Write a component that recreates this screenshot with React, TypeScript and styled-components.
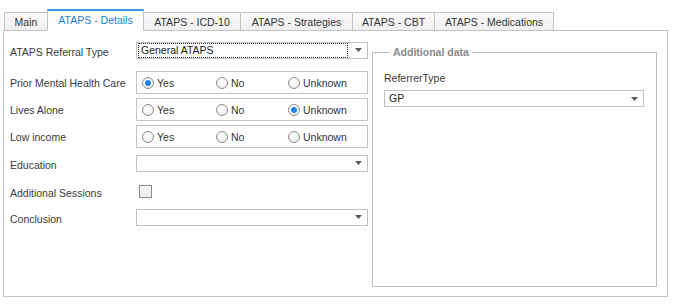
import React from "react";
import styled, { createGlobalStyle, css } from "styled-components";

const GlobalStyle = createGlobalStyle`
  html, body {
    margin: 0;
    padding: 0;
    background: #ffffff;
  }
  body {
    font-family: "Liberation Sans", Arial, sans-serif;
    font-size: 10.5px;
    color: #333333;
  }
`;

const Page = styled.div`
  width: 675px;
  height: 307px;
  overflow: hidden;
  background: #ffffff;
`;

const TabStrip = styled.div`
  display: flex;
  align-items: flex-end;
  height: 30px;
  padding-left: 4px;
  position: relative;
  z-index: 1;
`;

const Tab = styled.div<{ $w: number; $active?: boolean }>`
  box-sizing: border-box;
  width: ${(p) => p.$w}px;
  height: 18px;
  margin-right: -1px;
  display: flex;
  align-items: center;
  justify-content: center;
  border: 1px solid #c2c2c2;
  border-bottom: none;
  background: linear-gradient(#fbfbfb, #efefef);
  color: #333333;
  white-space: nowrap;

  ${(p) =>
    p.$active &&
    css`
      height: 22px;
      margin-bottom: -1px;
      border-top: 2px solid #3a97e4;
      border-bottom: 1px solid #ffffff;
      background: #ffffff;
      color: #1f7fd2;
      padding-bottom: 2px;
      position: relative;
      z-index: 2;
    `}
`;

const Panel = styled.div`
  box-sizing: border-box;
  margin-left: 3px;
  width: 665px;
  height: 267px;
  border: 1px solid #c4c4c4;
  display: flex;
  align-items: flex-start;
  padding: 10px 10px 0 6px;
`;

const Form = styled.div`
  display: flex;
  flex-direction: column;
  width: 358px;
`;

const Row = styled.div<{ $h: number; $mt?: number }>`
  display: flex;
  align-items: center;
  height: ${(p) => p.$h}px;
  margin-top: ${(p) => p.$mt ?? 0}px;
`;

const Label = styled.div<{ $drop?: number }>`
  width: 126px;
  flex: none;
  white-space: nowrap;
  color: #3a3a3a;
  padding-top: ${(p) => p.$drop ?? 0}px;
`;

const Combo = styled.div<{ $width?: number }>`
  box-sizing: border-box;
  width: ${(p) => p.$width ?? 232}px;
  height: 17px;
  border: 1px solid #c2c2c2;
  background: #ffffff;
  display: flex;
  align-items: center;
  padding: 0 5px 0 1px;
`;

const ComboText = styled.div<{ $focused?: boolean }>`
  flex: 1;
  height: 13px;
  line-height: 13px;
  padding-left: 2px;
  color: #222222;
  border: 1px solid transparent;

  ${(p) =>
    p.$focused &&
    css`
      border: 1px dotted #333333;
      margin-right: 7px;
    `}
`;

const RadioBox = styled.div`
  box-sizing: border-box;
  width: 232px;
  height: 23px;
  border: 1px solid #c4c4c4;
  display: grid;
  grid-template-columns: 74px 72px 1fr;
  align-items: center;
  padding-left: 5px;
`;

const RadioOption = styled.div`
  display: flex;
  align-items: center;
  gap: 3px;
  color: #333333;
`;

const RadioCircle = styled.span<{ $checked?: boolean }>`
  box-sizing: border-box;
  width: 12px;
  height: 12px;
  border-radius: 50%;
  border: 1px solid #8c8c8c;
  background: radial-gradient(circle at 40% 35%, #ffffff, #e9e9e9);
  display: flex;
  align-items: center;
  justify-content: center;

  &::after {
    content: "";
    width: 6px;
    height: 6px;
    border-radius: 50%;
    background: ${(p) => (p.$checked ? "#1e88e5" : "transparent")};
  }
`;

const CheckBox = styled.span`
  box-sizing: border-box;
  width: 13px;
  height: 13px;
  margin-left: 3px;
  border: 1px solid #8c8c8c;
  background: linear-gradient(#f7f7f7, #ececec);
`;

const FieldSet = styled.fieldset`
  box-sizing: border-box;
  margin: 5px 0 0 4px;
  width: 285px;
  height: 241px;
  border: 1px solid #bdbdbd;
  padding: 0 12px 0 11px;
  min-width: 0;
`;

const Legend = styled.legend`
  padding: 0 3px;
  margin-left: 6px;
  font-weight: bold;
  color: #8a8a8a;
  line-height: 13px;
`;

const FieldLabel = styled.div`
  margin-top: 13px;
  line-height: 13px;
  color: #3a3a3a;
`;

const FieldCombo = styled.div`
  margin-top: 5px;
`;

const Arrow = () => (
  <svg width="7" height="4" viewBox="0 0 7 4">
    <path d="M0 0h7L3.5 4z" fill="#5a5a5a" />
  </svg>
);

type ComboProps = { value?: string; focused?: boolean; width?: number };

const ComboBox = ({ value = "", focused, width }: ComboProps) => (
  <Combo $width={width}>
    <ComboText $focused={focused}>{value}</ComboText>
    <Arrow />
  </Combo>
);

const options = ["Yes", "No", "Unknown"];

const RadioGroup = ({ selected }: { selected: string }) => (
  <RadioBox>
    {options.map((o) => (
      <RadioOption key={o}>
        <RadioCircle $checked={o === selected} />
        {o}
      </RadioOption>
    ))}
  </RadioBox>
);

const tabs = [
  { label: "Main", w: 44 },
  { label: "ATAPS - Details", w: 97, active: true },
  { label: "ATAPS - ICD-10", w: 98 },
  { label: "ATAPS - Strategies", w: 113 },
  { label: "ATAPS - CBT", w: 83 },
  { label: "ATAPS - Medications", w: 120 },
];

export default function App() {
  return (
    <Page>
      <GlobalStyle />
      <TabStrip>
        {tabs.map((t) => (
          <Tab key={t.label} $w={t.w} $active={t.active}>
            {t.label}
          </Tab>
        ))}
      </TabStrip>
      <Panel>
        <Form>
          <Row $h={18}>
            <Label $drop={3}>ATAPS Referral Type</Label>
            <ComboBox value="General ATAPS" focused />
          </Row>
          <Row $h={23} $mt={12}>
            <Label>Prior Mental Health Care</Label>
            <RadioGroup selected="Yes" />
          </Row>
          <Row $h={23} $mt={4}>
            <Label>Lives Alone</Label>
            <RadioGroup selected="Unknown" />
          </Row>
          <Row $h={23} $mt={4}>
            <Label>Low income</Label>
            <RadioGroup selected="" />
          </Row>
          <Row $h={18} $mt={6}>
            <Label $drop={4}>Education</Label>
            <ComboBox />
          </Row>
          <Row $h={16} $mt={11}>
            <Label $drop={3}>Additional Sessions</Label>
            <CheckBox />
          </Row>
          <Row $h={18} $mt={9}>
            <Label $drop={4}>Conclusion</Label>
            <ComboBox />
          </Row>
        </Form>
        <FieldSet>
          <Legend>Additional data</Legend>
          <FieldLabel>ReferrerType</FieldLabel>
          <FieldCombo>
            <ComboBox value="GP" width={260} />
          </FieldCombo>
        </FieldSet>
      </Panel>
    </Page>
  );
}
